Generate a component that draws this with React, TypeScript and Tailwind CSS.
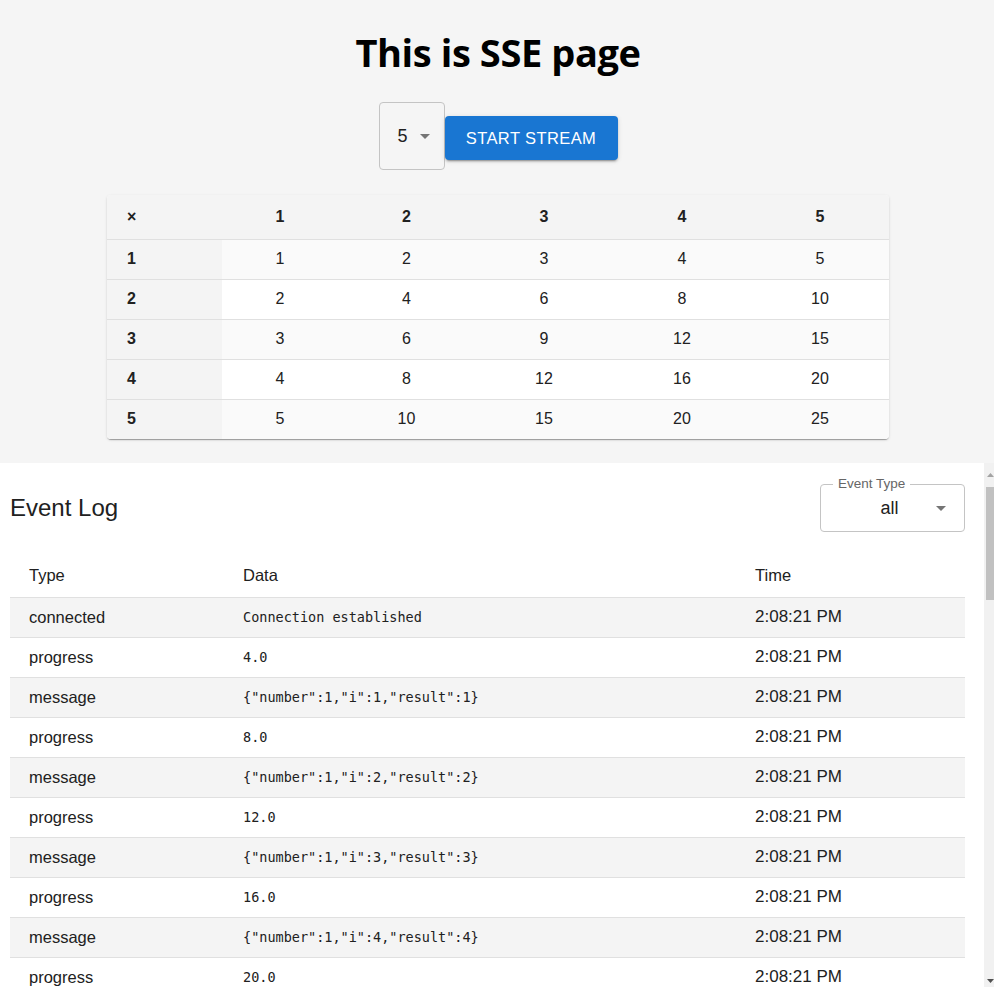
import React from 'react';

const nums = [1, 2, 3, 4, 5];

type LogRow = { type: string; data: string; time: string };

const buildLog = (): LogRow[] => {
  const rows: LogRow[] = [{ type: 'connected', data: 'Connection established', time: '2:08:21 PM' }];
  let step = 0;
  for (const n of nums) {
    for (const i of nums) {
      step += 1;
      rows.push({ type: 'progress', data: (step * 4).toFixed(1), time: '2:08:21 PM' });
      rows.push({ type: 'message', data: JSON.stringify({ number: n, i, result: n * i }), time: '2:08:21 PM' });
    }
  }
  rows.push({ type: 'complete', data: 'Stream finished', time: '2:08:21 PM' });
  return rows;
};

// only the rows that fit in the visible part of the panel
const logRows = buildLog().slice(0, 10);

const Caret = () => (
  <svg width="10" height="5" viewBox="0 0 10 5" className="fill-[#757575]">
    <path d="M0 0 L10 0 L5 5 Z" />
  </svg>
);

const App: React.FC = () => {
  return (
    <div className="h-[987px] overflow-hidden bg-[#f5f5f5] font-['Liberation_Sans',Arial,sans-serif] text-[#212121]">
      {/* Top: title, controls, multiplication table */}
      <div className="flex flex-col items-center pl-[2px] pt-[29px] pb-[24px]">
        <h1 className="font-['Open_Sans',sans-serif] text-[38px] font-bold leading-[46px] text-black tracking-[-0.4px]">
          This is SSE page
        </h1>

        <div className="mt-[27px] flex items-start">
          <div className="flex h-[68px] w-[66px] items-center justify-center gap-[12px] rounded-[4px] border border-[#c4c4c4] pl-[4px]">
            <span className="text-[18px]">5</span>
            <Caret />
          </div>
          <button className="mt-[14px] h-[44px] w-[173px] rounded-[4px] bg-[#1976d2] text-[16.5px] tracking-[0.4px] text-white shadow-[0_3px_1px_-2px_rgba(0,0,0,0.2),0_2px_2px_0_rgba(0,0,0,0.14),0_1px_5px_0_rgba(0,0,0,0.12)]">
            START STREAM
          </button>
        </div>

        <div className="mt-[25px] w-[782px] overflow-hidden rounded-[4px] bg-white shadow-[0_2px_1px_-1px_rgba(0,0,0,0.2),0_1px_1px_0_rgba(0,0,0,0.14),0_1px_3px_0_rgba(0,0,0,0.12)]">
          <table className="w-full table-fixed border-collapse text-[16px]">
            <colgroup>
              <col className="w-[115px]" />
              <col className="w-[116px]" />
              <col className="w-[137px]" />
              <col className="w-[138px]" />
              <col className="w-[138px]" />
              <col className="w-[138px]" />
            </colgroup>
            <thead>
              <tr className="h-[44px] border-b border-[#e0e0e0] bg-[#f4f4f4] font-bold">
                <th className="pl-[20px] text-left">×</th>
                {nums.map((n) => (
                  <th key={n} className="text-center">{n}</th>
                ))}
              </tr>
            </thead>
            <tbody>
              {nums.map((r, idx) => (
                <tr key={r} className={`h-[40px] border-b border-[#e0e0e0] last:border-b-0 ${idx % 2 === 0 ? 'bg-[#fafafa]' : 'bg-white'}`}>
                  <td className="bg-[#f4f4f4] pl-[20px] text-left font-bold">{r}</td>
                  {nums.map((c) => (
                    <td key={c} className="text-center">{r * c}</td>
                  ))}
                </tr>
              ))}
            </tbody>
          </table>
        </div>
      </div>

      {/* Event log panel with its scrollbar */}
      <div className="flex h-[524px]">
        <div className="w-[984px] overflow-hidden bg-white pl-[10px] pr-[19px]">
          <div className="mt-[21px] flex h-[48px] items-center justify-between">
            <h2 className="text-[24px] leading-[32px] text-[#212121]">Event Log</h2>
            <div className="relative h-[48px] w-[145px] rounded-[4px] border border-[#c4c4c4]">
              <span className="absolute -top-[9px] left-[12px] bg-white px-[5px] text-[13.5px] leading-[16px] text-[#666]">
                Event Type
              </span>
              <span className="absolute left-0 right-[6px] top-[12px] text-center text-[18px] leading-[22px]">all</span>
              <span className="absolute right-[18px] top-[21px] flex">
                <Caret />
              </span>
            </div>
          </div>

          <table className="mt-[22px] w-[955px] table-fixed border-collapse text-[16.5px]">
            <colgroup>
              <col className="w-[214px]" />
              <col className="w-[512px]" />
              <col className="w-[229px]" />
            </colgroup>
            <thead>
              <tr className="h-[43px] border-b border-[#e0e0e0] text-left">
                <th className="pl-[19px] font-normal">Type</th>
                <th className="pl-[19px] font-normal">Data</th>
                <th className="pl-[19px] font-normal">Time</th>
              </tr>
            </thead>
            <tbody>
              {logRows.map((row, idx) => (
                <tr key={idx} className={`h-[40px] border-b border-[#e0e0e0] ${idx % 2 === 0 ? 'bg-[#f4f4f4]' : 'bg-white'}`}>
                  <td className="pl-[19px]">{row.type}</td>
                  <td className="pl-[19px] font-['DejaVu_Sans_Mono',monospace] text-[13.5px]">{row.data}</td>
                  <td className="pl-[19px] text-[17px]">{row.time}</td>
                </tr>
              ))}
            </tbody>
          </table>
        </div>

        {/* scrollbar */}
        <div className="flex w-[10px] flex-col items-end bg-[#f1f1f1] pt-[10px] pb-[4px]">
          <svg width="7" height="4" viewBox="0 0 7 4" className="fill-[#a3a3a3]">
            <path d="M0 4 L3.5 0 L7 4 Z" />
          </svg>
          <div className="mt-[10px] h-[113px] w-[8px] bg-[#c1c1c1]" />
          <div className="flex-1" />
          <svg width="7" height="4" viewBox="0 0 7 4" className="fill-[#505050]">
            <path d="M0 0 L7 0 L3.5 4 Z" />
          </svg>
        </div>
      </div>
    </div>
  );
};

export default App;
